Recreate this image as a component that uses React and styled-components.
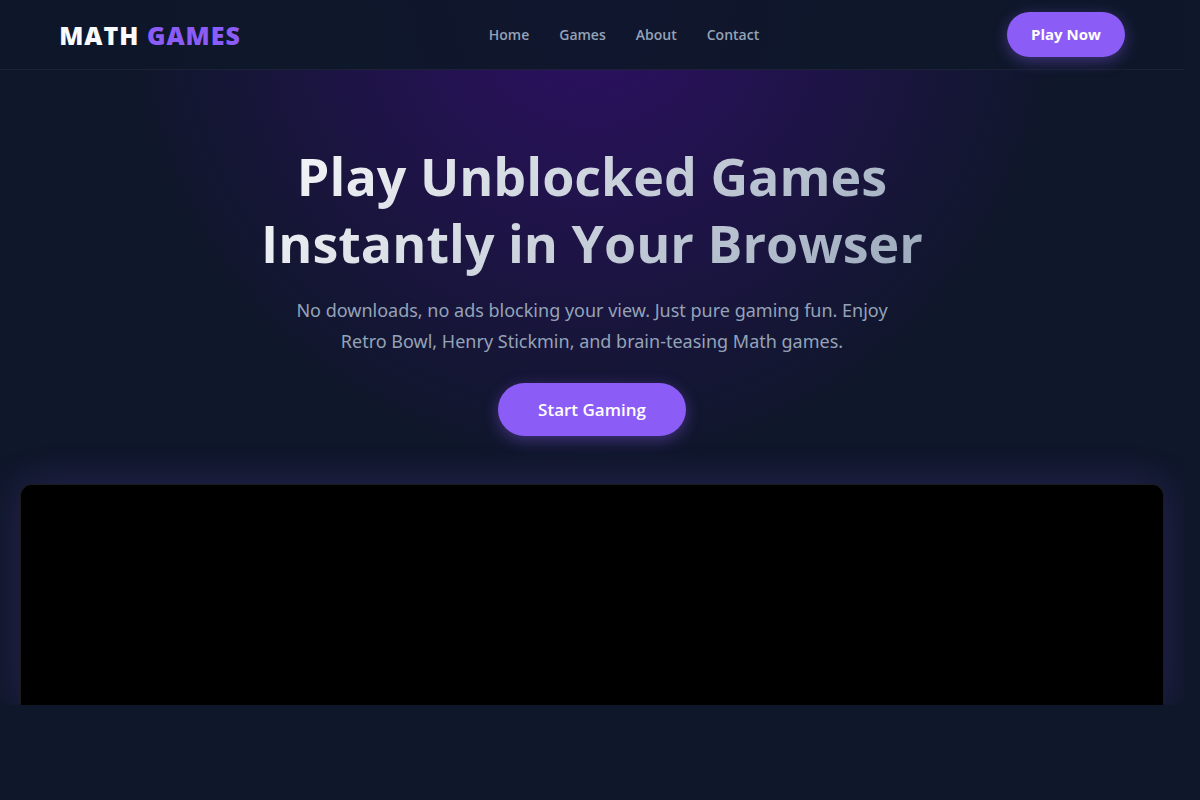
import React from "react";
import styled, { createGlobalStyle } from "styled-components";

const GlobalStyle = createGlobalStyle`
  * {
    box-sizing: border-box;
  }
  body {
    margin: 0;
    background-color: #0f172a;
    color: #f8fafc;
    font-family: "Segoe UI", "Open Sans", "Noto Sans", sans-serif;
  }
`;

const Page = styled.div`
  margin-right: 16px;
  overflow: hidden;
  background: radial-gradient(circle 470px at top, #2e1065, transparent);
`;

const Header = styled.header`
  display: flex;
  justify-content: space-between;
  align-items: center;
  padding: 12px 5%;
  background-color: rgba(15, 23, 42, 0.95);
  border-bottom: 1px solid rgba(255, 255, 255, 0.05);
`;

const Logo = styled.a`
  color: #f8fafc;
  font-size: 25px;
  font-weight: 800;
  line-height: 32px;
  letter-spacing: 1px;
  text-decoration: none;
  text-transform: uppercase;

  span {
    color: #8b5cf6;
  }
`;

const Nav = styled.nav`
  display: flex;
  gap: 30px;
`;

const NavLink = styled.a`
  color: #94a3b8;
  font-size: 14px;
  font-weight: 600;
  line-height: 20px;
  text-decoration: none;
  &:hover {
    color: #8b5cf6;
  }
`;

const Button = styled.button`
  padding: ${({ $large }) => ($large ? "14px 40px" : "12px 24px")};
  border: none;
  border-radius: 50px;
  background-color: #8b5cf6;
  color: white;
  font-family: inherit;
  font-size: ${({ $large }) => ($large ? "17px" : "15px")};
  line-height: ${({ $large }) => ($large ? "25px" : "21px")};
  font-weight: ${({ $large }) => ($large ? 600 : 700)};
  box-shadow: 0 4px 15px rgba(139, 92, 246, 0.4);
  cursor: pointer;
  &:hover {
    background-color: #7c3aed;
  }
`;

const Hero = styled.section`
  display: flex;
  flex-direction: column;
  align-items: center;
  padding: 72px 20px 48px;
  text-align: center;
`;

const Title = styled.h1`
  width: 100%;
  max-width: 800px;
  margin: 0 0 19px;
  font-size: 52px;
  font-weight: 700;
  line-height: 67px;
  background: linear-gradient(135deg, #ffffff, #94a3b8);
  -webkit-background-clip: text;
  background-clip: text;
  -webkit-text-fill-color: transparent;
`;

const Subtitle = styled.p`
  max-width: 620px;
  margin: 0 0 26px;
  color: #94a3b8;
  font-family: "Segoe UI", "Noto Sans", "Open Sans", sans-serif;
  font-size: 18px;
  line-height: 31px;
`;

const GameStage = styled.main`
  height: 221px;
  margin: 0 20px;
  border: 1px solid rgba(255, 255, 255, 0.1);
  border-bottom: none;
  border-radius: 12px 12px 0 0;
  background-color: #000;
  box-shadow: 0 0 40px rgba(139, 92, 246, 0.2);
`;

const links = ["Home", "Games", "About", "Contact"];

const App = () => {
  return (
    <>
      <GlobalStyle />
      <Page>
        <Header>
          <Logo href="#home">
            Math <span>Games</span>
          </Logo>
          <Nav>
            {links.map((name) => (
              <NavLink key={name} href={`#${name.toLowerCase()}`}>
                {name}
              </NavLink>
            ))}
          </Nav>
          <Button type="button">Play Now</Button>
        </Header>
        <Hero>
          <Title>
            Play Unblocked Games
            <br />
            Instantly in Your Browser
          </Title>
          <Subtitle>
            No downloads, no ads blocking your view. Just pure gaming fun. Enjoy
            Retro Bowl, Henry Stickmin, and brain-teasing Math games.
          </Subtitle>
          <Button type="button" $large>
            Start Gaming
          </Button>
        </Hero>
        <GameStage />
      </Page>
    </>
  );
};

export default App;
